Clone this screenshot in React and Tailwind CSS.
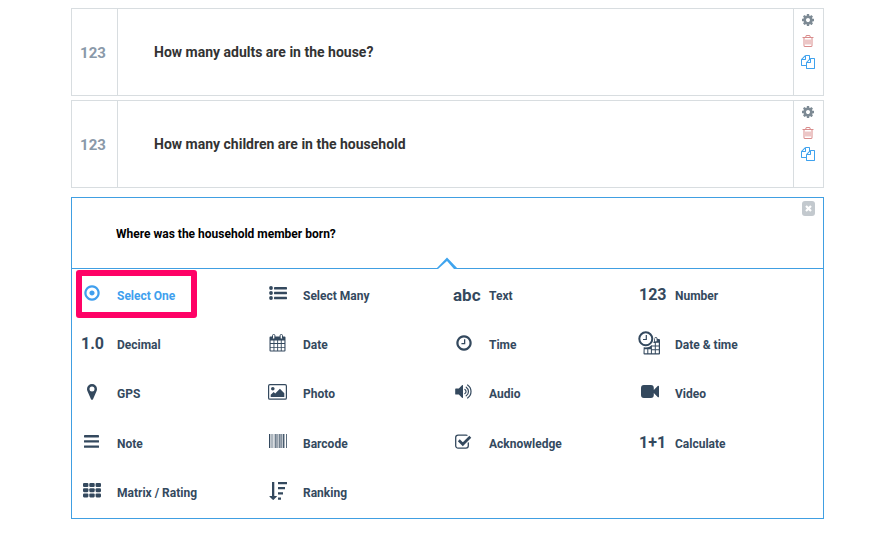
const RING =
  "M896 352q-148 0-273 73t-198 198-73 273 73 273 198 198 273 73 273-73 198-198 73-273-73-273-198-198-273-73zm768 544q0 209-103 385.5t-279.5 279.5-385.5 103-385.5-103-279.5-279.5-103-385.5 103-385.5 279.5-279.5 385.5-103 385.5 103 279.5 279.5 103 385.5z";

function Glyph({ size, d }) {
  return (
    <svg width={size} height={size} viewBox="0 0 1792 1792" fill="currentColor" fillRule="evenodd" aria-hidden="true" className="shrink-0">
      <path d={d} />
    </svg>
  );
}

function Drawing({ w = 22, h = 22, children }) {
  return (
    <svg width={w} height={h} viewBox={`0 0 ${w} ${h}`} fill="currentColor" aria-hidden="true" className="shrink-0">
      {children}
    </svg>
  );
}

const Cog = () => (
  <Glyph
    size={14}
    d="M1152 896q0-106-75-181t-181-75-181 75-75 181 75 181 181 75 181-75 75-181zm512-109v222q0 12-8 23t-20 13l-185 28q-19 54-39 91 35 50 107 138 10 12 10 25t-9 23q-27 37-99 108t-94 71q-12 0-26-9l-138-108q-44 23-91 38-16 136-29 186-7 28-36 28h-222q-14 0-24.5-8.5t-11.5-21.5l-28-184q-49-16-90-37l-141 107q-10 9-25 9-14 0-25-11-126-114-165-168-7-10-7-23 0-12 8-23 15-21 51-66.5t54-70.5q-27-50-41-99l-183-27q-13-2-21-12.5t-8-23.5v-222q0-12 8-23t19-13l186-28q14-46 39-92-40-57-107-138-10-12-10-24 0-10 9-23 26-36 98.5-107.5t94.5-71.5q13 0 26 10l138 107q44-23 91-38 16-136 29-186 7-28 36-28h222q14 0 24.5 8.5t11.5 21.5l28 184q49 16 90 37l142-107q9-9 24-9 13 0 25 10 129 119 165 170 7 8 7 22 0 12-8 23-15 21-51 66.5t-54 70.5q26 50 41 98l183 28q13 2 21 12.5t8 23.5z"
  />
);

const Trash = () => (
  <Glyph
    size={14}
    d="M704 736v576q0 14-9 23t-23 9h-64q-14 0-23-9t-9-23v-576q0-14 9-23t23-9h64q14 0 23 9t9 23zm256 0v576q0 14-9 23t-23 9h-64q-14 0-23-9t-9-23v-576q0-14 9-23t23-9h64q14 0 23 9t9 23zm256 0v576q0 14-9 23t-23 9h-64q-14 0-23-9t-9-23v-576q0-14 9-23t23-9h64q14 0 23 9t9 23zm128 724v-948h-896v948q0 22 7 40.5t14.5 27 10.5 8.5h832q3 0 10.5-8.5t14.5-27 7-40.5zm-672-1076h448l-48-117q-7-9-17-11h-317q-10 2-17 11zm928 32v64q0 14-9 23t-23 9h-96v948q0 83-47 143.5t-113 60.5h-832q-66 0-113-58.5t-47-141.5v-952h-96q-14 0-23-9t-9-23v-64q0-14 9-23t23-9h309l70-167q15-37 54-63t79-26h320q40 0 79 26t54 63l70 167h309q14 0 23 9t9 23z"
  />
);

const Files = () => (
  <Glyph
    size={14}
    d="M1696 384q40 0 68 28t28 68v1216q0 40-28 68t-68 28h-960q-40 0-68-28t-28-68v-288h-544q-40 0-68-28t-28-68v-672q0-40 20-88t48-76l408-408q28-28 76-48t88-20h416q40 0 68 28t28 68v328q68-40 128-40h416zm-544 213l-299 299h299v-299zm-640-384l-299 299h299v-299zm196 647l316-316v-416h-384v416q0 40-28 68t-68 28h-416v640h512v-256q0-40 20-88t48-76zm956 804v-1152h-384v416q0 40-28 68t-68 28h-416v640h896z"
  />
);

const DotCircle = () => (
  <Glyph size={18} d={"M1152 896q0 106-75 181t-181 75-181-75-75-181 75-181 181-75 181 75 75 181z" + RING} />
);

const Clock = () => (
  <Glyph
    size={18}
    d={"M1024 544v448q0 14-9 23t-23 9h-320q-14 0-23-9t-9-23v-64q0-14 9-23t23-9h224v-352q0-14 9-23t23-9h64q14 0 23 9t9 23z" + RING}
  />
);

const ListUl = () => (
  <Drawing w={18} h={14}>
    <circle cx="2" cy="2" r="1.9" />
    <circle cx="2" cy="7" r="1.9" />
    <circle cx="2" cy="12" r="1.9" />
    <rect x="5" y="1" width="13" height="2.4" rx=".4" />
    <rect x="5" y="5.8" width="13" height="2.4" rx=".4" />
    <rect x="5" y="10.8" width="13" height="2.4" rx=".4" />
  </Drawing>
);

const Calendar = () => (
  <Drawing w={17} h={18}>
    <path d="M1.5 2.5h14a1 1 0 0 1 1 1v13a1 1 0 0 1-1 1h-14a1 1 0 0 1-1-1v-13a1 1 0 0 1 1-1z" />
    <path
      fill="#fff"
      d="M1.6 6.4h2.9v2.7H1.6zM5.4 6.4h2.8v2.7H5.4zM9.1 6.4h2.7v2.7H9.1zM12.7 6.4h2.7v2.7h-2.7zM1.6 10h2.9v2.9H1.6zM5.4 10h2.8v2.9H5.4zM9.1 10h2.7v2.9H9.1zM12.7 10h2.7v2.9h-2.7zM1.6 13.8h2.9v2.6H1.6zM5.4 13.8h2.8v2.6H5.4zM9.1 13.8h2.7v2.6H9.1zM12.7 13.8h2.7v2.6h-2.7z"
    />
    <rect x="3.5" y=".5" width="2.4" height="4.6" rx="1.1" fill="#fff" stroke="currentColor" />
    <rect x="11.1" y=".5" width="2.4" height="4.6" rx="1.1" fill="#fff" stroke="currentColor" />
  </Drawing>
);

const ClockCalendar = () => (
  <Drawing w={23} h={24}>
    <path d="M6 8h15a1 1 0 0 1 1 1v13.500a1 1 0 0 1-1 1H6.500a1 1 0 0 1-1-1z" />
    <path
      fill="#fff"
      d="M6.600 18.300h2.700v3.900H6.600zM10.300 18.300h2.600v3.900h-2.600zM13.900 19.200h2.900v3h-2.900zM17.800 19.200h3v3h-3zM13.900 15.500h2.900v2.800h-2.900zM17.800 15.500h3v2.800h-3zM17.800 11.800h3v2.700h-3zM13.900 12h2.900v2.500h-2.900z"
    />
    <rect x="16.500" y="6.500" width="2.600" height="4.400" rx="1.200" fill="#fff" stroke="currentColor" />
    <circle cx="7.800" cy="7.800" r="8.600" fill="#fff" />
    <circle cx="7.800" cy="7.800" r="6.500" fill="none" stroke="currentColor" strokeWidth="2" />
    <path d="M8.300 4v4.500H5" fill="none" stroke="currentColor" strokeWidth="1.200" />
  </Drawing>
);

const Pin = () => (
  <Drawing w={10} h={16}>
    <path fillRule="evenodd" d="M5 0a5 5 0 0 1 5 5c0 .8-.1 1.500-.4 2.100L6 15.200a1.100 1.100 0 0 1-2 0L.4 7.100C.1 6.500 0 5.800 0 5a5 5 0 0 1 5-5zm0 2.500a2.500 2.500 0 1 0 0 5 2.500 2.500 0 0 0 0-5z" />
  </Drawing>
);

const Photo = () => (
  <Drawing w={19} h={16}>
    <rect x=".6" y=".6" width="17.800" height="14.600" rx="1.300" fill="none" stroke="currentColor" strokeWidth="1.200" />
    <circle cx="4.800" cy="4.800" r="1.800" />
    <path d="M2.700 13v-2.300L5.700 8l1.500 1.500 4.700-4.700 4.400 4.400V13z" />
  </Drawing>
);

const Audio = () => (
  <Drawing w={17} h={15}>
    <path d="M8 1.600v11.800a.6.6 0 0 1-1 .4L3.800 10.500H.8a.6.6 0 0 1-.6-.6V5.100c0-.3.300-.6.600-.6h3L7 1.200a.6.6 0 0 1 1 .4z" />
    <path d="M9.900 5.400a2.500 2.500 0 0 1 0 4.200M11.200 3.200a5.200 5.200 0 0 1 0 8.600M12.600 1a7.900 7.900 0 0 1 0 13" fill="none" stroke="currentColor" strokeWidth="1.200" strokeLinecap="round" />
  </Drawing>
);

const Video = () => (
  <Drawing w={18} h={13}>
    <path d="M2.900 0h7a2.900 2.900 0 0 1 2.900 2.900V5l3.900-4.100c.5-.5 1.300-.2 1.300.4v10.400c0 .6-.8.9-1.300.4L12.800 8v2.100A2.900 2.900 0 0 1 9.900 13h-7A2.900 2.900 0 0 1 0 10.100V2.900A2.900 2.900 0 0 1 2.900 0z" />
  </Drawing>
);

const Bars = () => (
  <Drawing w={15} h={13}>
    <rect y="0" width="15" height="2.400" rx=".4" />
    <rect y="5.200" width="15" height="2.400" rx=".4" />
    <rect y="10.400" width="15" height="2.400" rx=".4" />
  </Drawing>
);

const Barcode = () => (
  <Drawing w={18} h={14}>
    <path d="M0 0h1v14H0zM1.500 0h.3v14h-.3zM2.500 0h.4v14h-.4zM3.600 0h.4v14h-.4zM4.800 0h.5v14h-.5zM6 0h.7v14H6zM7.300 0h.5v14h-.5zM8.500 0h.5v14h-.5zM9.500 0h.3v14h-.3zM10.200 0h.7v14h-.7zM11.500 0h.5v14h-.5zM12.200 0h.6v14h-.6zM13.200 0h.3v14h-.3zM14 0h.9v14H14zM15.500 0h.4v14h-.4zM17 0h.8v14H17z" />
  </Drawing>
);

const CheckSquare = () => (
  <Drawing w={17} h={15}>
    <path d="M13.300 8.800v2.900a2.400 2.400 0 0 1-2.400 2.400H3.100A2.400 2.400 0 0 1 .7 11.700V3.500A2.400 2.400 0 0 1 3.100 1.100h7.800c.4 0 .7 0 1 .2" fill="none" stroke="currentColor" strokeWidth="1.300" strokeLinecap="round" />
    <path d="M3.800 6.300l4 4L15.300 2.800" fill="none" stroke="currentColor" strokeWidth="2.700" />
  </Drawing>
);

const Matrix = () => (
  <Drawing w={18} h={15}>
    {[0, 6.3, 12.6].map((x) =>
      [0, 5.2, 10.4].map((y) => <rect key={`${x}-${y}`} x={x} y={y} width="5.400" height="4" rx="1.100" />)
    )}
  </Drawing>
);

const Ranking = () => (
  <Drawing w={18} h={18}>
    <path d="M3 0h2.300v14h2.200c.4 0 .5.400.2.700L4.600 17.800a.5.5 0 0 1-.8 0L.6 14.700c-.3-.3-.1-.7.200-.7H3z" />
    <path d="M9 0h9v2.300H9zM9 5h7v2.300H9zM9 10.200h5v2.300H9zM9 15.400h3v2.300H9z" />
  </Drawing>
);

const Word = ({ children }) => <span className="text-[16px] leading-5 font-bold">{children}</span>;
const BigWord = ({ children }) => <span className="text-[17px] leading-5 font-bold">{children}</span>;

const TYPES = [
  { label: "Select One", icon: <DotCircle />, picked: true },
  { label: "Select Many", icon: <ListUl /> },
  { label: "Text", icon: <BigWord>abc</BigWord>, wide: true },
  { label: "Number", icon: <Word>123</Word>, wide: true },
  { label: "Decimal", icon: <Word>1.0</Word>, wide: true },
  { label: "Date", icon: <Calendar /> },
  { label: "Time", icon: <Clock /> },
  { label: "Date & time", icon: <ClockCalendar /> },
  { label: "GPS", icon: <Pin /> },
  { label: "Photo", icon: <Photo /> },
  { label: "Audio", icon: <Audio /> },
  { label: "Video", icon: <Video /> },
  { label: "Note", icon: <Bars /> },
  { label: "Barcode", icon: <Barcode /> },
  { label: "Acknowledge", icon: <CheckSquare /> },
  { label: "Calculate", icon: <Word>1+1</Word>, wide: true },
  { label: "Matrix / Rating", icon: <Matrix /> },
  { label: "Ranking", icon: <Ranking /> },
];

function QuestionCard({ title }) {
  return (
    <article className="flex h-[88px] border border-[#d8dde0]">
      <div className="flex w-[46px] items-center justify-center border-r border-[#d8dde0] pt-[2px] pr-[3px] text-[15px] font-bold text-[#8a99a9]">
        123
      </div>
      <h2 className="flex flex-1 items-center pl-9 text-[14px] font-bold text-[#333]">{title}</h2>
      <div className="flex w-[30px] flex-col items-center gap-[7px] border-l border-[#d8dde0] pt-1 pr-px">
        <button type="button" aria-label="Settings" className="text-[#7d8a94]"><Cog /></button>
        <button type="button" aria-label="Delete question" className="text-[#d98c8c]"><Trash /></button>
        <button type="button" aria-label="Duplicate question" className="text-[#3fa2ee]"><Files /></button>
      </div>
    </article>
  );
}

function TypeButton({ label, icon, picked, wide }) {
  return (
    <button
      type="button"
      className={`relative flex items-center pl-[9px] text-left ${picked ? "text-[#409fee]" : "text-[#34495e]"}`}
    >
      <span className={`mr-[15px] flex h-5 w-[21px] items-center ${wide ? "justify-start" : "mb-[3px] justify-center"}`}>
        {icon}
      </span>
      <span className="pt-[2px] text-[12px] leading-4 font-bold whitespace-nowrap">{label}</span>
      {picked && (
        <span className="pointer-events-none absolute top-0 left-1 h-12 w-[121px] rounded-[3px] border-6 border-[#ff0266]" />
      )}
    </button>
  );
}

export default function App() {
  return (
    <main className="min-h-screen bg-white pt-2 pr-[68px] pb-3 pl-[71px] font-['Roboto',sans-serif]">
      <div className="flex flex-col gap-1">
        <QuestionCard title="How many adults are in the house?" />
        <QuestionCard title="How many children are in the household" />
      </div>

      <section className="mt-[9px] border border-[#409fe2]">
        <header className="relative flex h-[71px] border-b border-[#409fe2] pr-2 pl-11">
          <input
            aria-label="Question label"
            defaultValue="Where was the household member born?"
            className="min-w-0 flex-1 bg-transparent pt-[2px] text-[12px] font-bold text-black outline-none"
          />
          <button
            type="button"
            aria-label="Close"
            className="mt-[3px] flex h-[15px] w-[13px] items-center justify-center rounded-[3px] bg-[#c3c9ce] text-white"
          >
            <Drawing w={7} h={7}>
              <path d="M1 1l5 5M6 1L1 6" stroke="currentColor" strokeWidth="2.200" />
            </Drawing>
          </button>
          <svg width="22" height="12" viewBox="0 0 22 12" aria-hidden="true" className="absolute -bottom-px left-1/2 -ml-3">
            <path d="M1 12L11 1.500 21 12z" fill="#fff" />
            <path d="M0 12L11 .5 22 12H18L11 4 2 12z" fill="#3fa4ee" />
          </svg>
        </header>
        <div className="grid h-[249px] grid-cols-4 grid-rows-5 py-px pr-[7px]">
          {TYPES.map((type) => (
            <TypeButton key={type.label} {...type} />
          ))}
        </div>
      </section>
    </main>
  );
}
